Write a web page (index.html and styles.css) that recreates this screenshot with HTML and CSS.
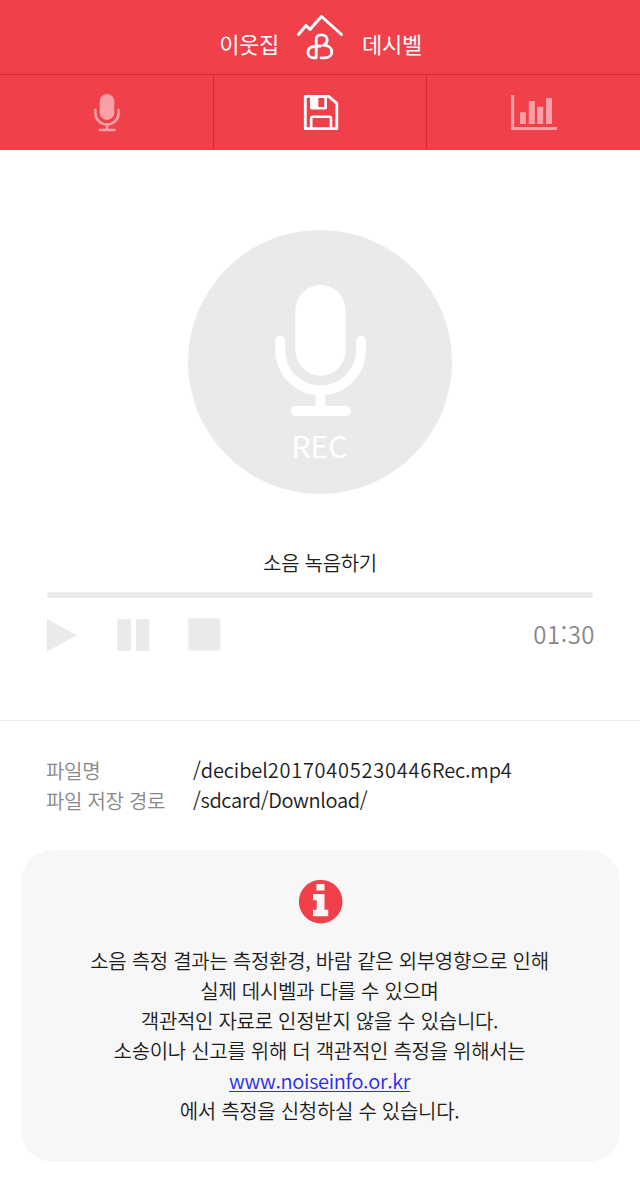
FILE: index.html
```html
<!DOCTYPE html>
<html lang="ko">
<head>
<meta charset="utf-8">
<title>이웃집 데시벨</title>
<link rel="stylesheet" href="styles.css">
</head>
<body>
<header class="brand">
  <span class="brand-left">이웃집</span>
  <svg class="logo" width="48" height="48" viewBox="296 13 48 48" fill="none" stroke="#fff" stroke-linecap="round" stroke-linejoin="round">
    <path stroke-width="3" d="M298.5 34.5L306 25.5L310 29.5L321.5 16.5L341.5 34.5"/>
    <path stroke-width="2.8" d="M316.2 57.8V39.5C316.2 36.5 318.3 34.8 321.3 34.8C325 34.8 327.2 37 327.2 39.7C327.2 42.4 325.6 44.3 323.4 45.4C329 45.4 331.8 48.3 331.8 51.7C331.8 55.2 329.2 57.8 325 57.8H321M316.2 57.8H313.5C310.2 57.8 307.9 55.6 307.9 52.5C307.9 49.3 310 46.8 314 46.5L320.5 46"/>
  </svg>
  <span class="brand-right">데시벨</span>
</header>
<nav class="tabs">
  <a class="tab dim">
    <svg width="28" height="40" viewBox="93 93 28 40">
      <rect x="99.7" y="94" width="14.6" height="26" rx="7.3" fill="currentColor"/>
      <path d="M95.4 109.8V113A11.6 11.6 0 0 0 118.6 113V109.8M107 124.6V130M99.8 130H114.4" fill="none" stroke="currentColor" stroke-width="2.6" stroke-linecap="round"/>
    </svg>
  </a>
  <a class="tab active">
    <svg width="36" height="36" viewBox="303 94 36 36">
      <path d="M305.3 96.3H328.5L336.8 103.4V128.7H305.3Z" fill="none" stroke="#fff" stroke-width="2.8" stroke-linejoin="round"/>
      <path fill-rule="evenodd" fill="#fff" d="M310 97H327V107.5Q327 109.5 325 109.5H312Q310 109.5 310 107.5ZM318.3 98H324.3V107H318.3Z"/>
      <path d="M311.2 128V118.5Q311.2 116.8 313 116.8H329.2Q331 116.8 331 118.5V128" fill="none" stroke="#fff" stroke-width="2.6"/>
    </svg>
  </a>
  <a class="tab dim">
    <svg class="chart" width="46" height="36" viewBox="511 95 46 36" fill="currentColor">
      <path d="M511 95H514.2V127H557V130H511Z"/>
      <path d="M520 112.3H526V124H520ZM528.8 101H534.8V124H528.8ZM537.2 106.7H543.2V124H537.2ZM546 98H552V124H546Z"/>
    </svg>
  </a>
</nav>
<main>
  <section class="recorder">
    <button class="record">
      <svg width="92" height="132" viewBox="275 285 92 132">
        <rect x="295.4" y="285" width="50.2" height="90.7" rx="25.1" fill="#fff"/>
        <path d="M280.2 340.5V350A40.4 40.4 0 0 0 361 350V340.5M320.5 390.5V411M295.5 411H346" fill="none" stroke="#fff" stroke-width="9.8" stroke-linecap="round"/>
      </svg>
      <span class="rec">REC</span>
    </button>
    <h1 class="caption">소음 녹음하기</h1>
    <div class="track"></div>
    <div class="controls">
      <svg width="174" height="34" viewBox="47 618 174 34" fill="#eaeaea">
        <path d="M47 620Q47 619 48 619.5L76 634.7Q76.8 635.2 76 635.7L48 651Q47 651.3 47 650.3Z"/>
        <rect x="117.2" y="619.2" width="13.8" height="31.8" rx="1"/>
        <rect x="136" y="619.2" width="13.2" height="31.8" rx="1"/>
        <rect x="188.2" y="618.2" width="32" height="32.4" rx="1"/>
      </svg>
      <span class="time">01:30</span>
    </div>
  </section>
  <dl class="file">
    <dt>파일명</dt><dd>/decibel<span class="digits">20170405230446</span>Rec.mp4</dd>
    <dt>파일 저장 경로</dt><dd class="path">/sdcard/Download/</dd>
  </dl>
  <section class="notice">
    <svg class="info" width="44" height="44" viewBox="299 880 44 44">
      <circle cx="320.7" cy="901.7" r="21.8" fill="#f0414b"/>
      <path fill="#f7f7f7" d="M316.5 884H324.5V890.5H316.5ZM313 894H324.5V909.8H328.2V916.3H313V909.8H316.7V900.3H313Z"/>
    </svg>
    <p>소음 측정 결과는 측정환경, 바람 같은 외부영향으로 인해</p>
    <p>실제 데시벨과 다를 수 있으며</p>
    <p>객관적인 자료로 인정받지 않을 수 있습니다.</p>
    <p>소송이나 신고를 위해 더 객관적인 측정을 위해서는</p>
    <p><a class="link">www.noiseinfo.or.kr</a></p>
    <p>에서 측정을 신청하실 수 있습니다.</p>
  </section>
</main>
</body>
</html>
```

FILE: styles.css
```css
* { box-sizing: border-box; }
body {
  margin: 0;
  width: 640px;
  height: 1195px;
  background: #fff;
  color: #1c1c1c;
  font-family: "Noto Sans CJK KR", sans-serif;
  font-size: 20px;
  font-weight: 350;
  line-height: 30px;
  letter-spacing: -0.3px;
}
.brand {
  height: 75px;
  display: grid;
  grid-template-columns: 279px 83px 278px;
  background: #f0414b;
  border-bottom: 1px solid #d32b36;
  color: #fff;
  font-size: 22px;
  font-weight: 400;
}
.brand span { padding-top: 28px; white-space: nowrap; }
.brand-left { text-align: right; }
.logo { margin: 13px 0 0 17px; }
.tabs {
  height: 75px;
  display: grid;
  grid-template-columns: 214px 213px 213px;
  background: #f0414b;
}
.tab { display: flex; justify-content: center; align-items: flex-start; padding-top: 18px; }
.tab + .tab { padding-top: 19px; }
.tab:not(:last-child) { border-right: 1px solid #d32b36; }
.tab.active { padding-left: 2px; }
.dim { color: #f8a0a5; }
.chart { margin: 1px 0 0 1px; }
.recorder { height: 571px; padding: 80px 46px 0 47px; border-bottom: 1px solid #eaeaea; }
.record {
  display: flex;
  flex-direction: column;
  align-items: center;
  width: 264px;
  height: 264px;
  margin: 0 0 0 141px;
  padding: 55px 0 0 1px;
  border: 0;
  border-radius: 50%;
  background: #eaeaea;
}
.rec { margin: 8px 2px 0 0; color: #fff; font: 400 30px/40px "Noto Sans CJK KR", sans-serif; letter-spacing: 0; }
.caption { margin: 54px 1px 0 0; font-size: 20px; font-weight: 350; text-align: center; }
.track { height: 6px; margin: 14px 1px 0 0; border-radius: 3px; background: #eaeaea; }
.controls { display: flex; justify-content: space-between; margin: 20px -1px 0 0; }
.time { padding-top: 1px; color: #888; font-size: 24px; letter-spacing: 0.5px; }
.file {
  display: grid;
  grid-template-columns: 147px 1fr;
  margin: 35px 0 0;
  padding-left: 46px;
}
.file dt { color: #888; }
.file dd { margin: -1px 0 1px; letter-spacing: -0.1px; }
.file .path { letter-spacing: -0.35px; }
.digits { letter-spacing: 0.75px; }
.notice {
  width: 599px;
  height: 312px;
  margin: 34px 0 0 21px;
  padding-top: 30px;
  border-radius: 32px;
  background: #f7f7f7;
  text-align: center;
}
.info { display: block; margin: 0 auto 22px; }
.notice p { margin: 0 2px 0 0; }
.link { color: #2a2af5; letter-spacing: -0.32px; text-decoration: underline; text-decoration-thickness: 1px; text-underline-offset: 2px; }
```
